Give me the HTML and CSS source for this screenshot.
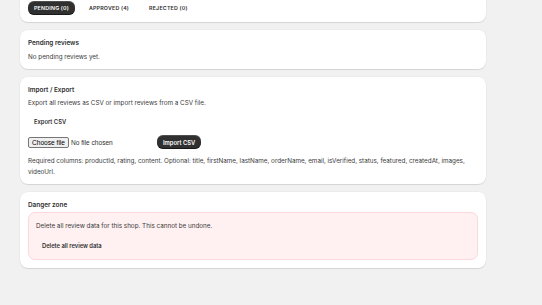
FILE: index.html
```html
<!DOCTYPE html>
<html>
<head>
<meta charset="utf-8">
<link rel="stylesheet" href="styles.css">
</head>
<body>
<div class="page">
  <section class="card tabs-card">
    <div class="tabs">
      <button class="tab active">PENDING (0)</button>
      <button class="tab">APPROVED (4)</button>
      <button class="tab">REJECTED (0)</button>
    </div>
  </section>

  <section class="card card-pending">
    <h2 class="card-title">Pending reviews</h2>
    <p class="text">No pending reviews yet.</p>
  </section>

  <section class="card card-import">
    <h2 class="card-title">Import / Export</h2>
    <p class="text desc">Export all reviews as CSV or import reviews from a CSV file.</p>
    <div class="row-export"><button class="plain-btn">Export CSV</button></div>
    <div class="file-row">
      <label class="file-picker">
        <input type="file" class="file-native">
        <span class="file-btn">Choose file</span>
        <span class="file-name">No file chosen</span>
      </label>
      <button class="dark-btn">Import CSV</button>
    </div>
    <p class="text help">Required columns: productId, rating, content. Optional: title, firstName, lastName, orderName, email, isVerified, status, featured, createdAt, images, videoUrl.</p>
  </section>

  <section class="card card-danger">
    <h2 class="card-title">Danger zone</h2>
    <div class="danger-box">
      <p class="text">Delete all review data for this shop. This cannot be undone.</p>
      <div class="row-delete"><button class="plain-btn">Delete all review data</button></div>
    </div>
  </section>
</div>
</body>
</html>
```

FILE: styles.css
```css
* { box-sizing: border-box; }
html, body { margin: 0; padding: 0; }
body {
  background: #f1f1f1;
  font-family: Inter, "Liberation Sans", Arial, sans-serif;
  color: #303030;
  height: 305px;
  overflow: hidden;
}
.page {
  width: 466px;
  margin: -7px 0 0 20px;
  display: flex;
  flex-direction: column;
  gap: 8px;
}
.card {
  background: #fff;
  border-radius: 8px;
  box-shadow: 0 1px 1px rgba(0,0,0,0.10), 0 0 0 0.5px rgba(0,0,0,0.04);
  padding: 8px 8px 7px;
}
.tabs { display: flex; gap: 8px; }
.tab {
  font-family: inherit;
  font-size: 5.3px;
  font-weight: 600;
  letter-spacing: 0.2px;
  color: #303030;
  background: transparent;
  border: none;
  border-radius: 6px;
  height: 14px;
  padding: 0 6px;
  line-height: 14px;
}
.tab.active {
  background: #303030;
  color: #fff;
  box-shadow: inset 0 -1px 0 rgba(0,0,0,0.5), inset 0 1px 0 rgba(255,255,255,0.15);
}
.card-title {
  margin: 0;
  font-size: 6.4px;
  font-weight: 600;
  line-height: 10px;
}
.text {
  margin: 0;
  font-size: 6.3px;
  line-height: 10px;
  color: #3a3a3a;
}
.card-pending .text { margin-top: 4px; }
.desc { margin-top: 3px; }
.row-export { margin-top: 6px; display: flex; }
.plain-btn {
  font-family: inherit;
  font-size: 5.8px;
  font-weight: 600;
  color: #303030;
  background: transparent;
  border: none;
  height: 14px;
  padding: 0 6px;
  border-radius: 6px;
}
.file-row {
  margin-top: 7px;
  display: flex;
  align-items: center;
  gap: 4px;
}
.file-picker {
  width: 125px;
  display: flex;
  align-items: center;
  gap: 2px;
  font-family: "Liberation Sans", Arial, sans-serif;
  font-size: 6.6px;
  color: #303030;
}
.file-native { display: none; }
.file-btn {
  display: inline-block;
  height: 11px;
  line-height: 9px;
  padding: 0 3px;
  border: 1px solid #767676;
  border-radius: 2px;
  background: #efefef;
  color: #000;
}
.file-name { color: #303030; }
.dark-btn {
  font-family: inherit;
  font-size: 5.8px;
  font-weight: 600;
  color: #fff;
  background: #303030;
  border: none;
  border-radius: 6px;
  height: 14px;
  padding: 0 6px;
  box-shadow: inset 0 -1px 0 rgba(0,0,0,0.5), inset 0 1px 0 rgba(255,255,255,0.15);
}
.help {
  margin-top: 7px;
  line-height: 11px;
}
.card-import { padding-bottom: 6px; }
.card-danger { padding: 8px 8px 8px; }
.danger-box {
  margin-top: 2px;
  background: #fff0f1;
  border: 1px solid #fcd7db;
  border-radius: 7px;
  padding: 8px 7px 7px;
}
.row-delete { margin-top: 7px; display: flex; }
```
